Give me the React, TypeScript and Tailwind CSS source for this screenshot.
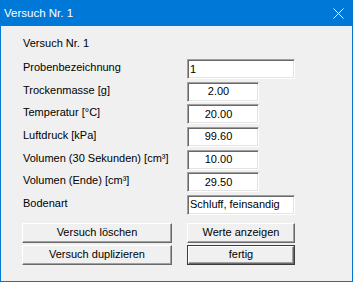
import React from "react";

const font = { fontFamily: '"Liberation Sans", Arial, sans-serif' };

function Field({ value, wide, align }: { value: string; wide?: boolean; align: "left" | "center" }) {
  return (
    <div
      className={`${wide ? "w-[108px]" : "w-[72px]"} h-[20px] bg-white border border-t-[#a0a0a0] border-l-[#a0a0a0] border-r-white border-b-white shadow-[inset_1px_1px_0_#696969,inset_-1px_-1px_0_#e3e3e3] flex items-center text-[11px] leading-[13px] text-black ${
        align === "left" ? "justify-start pl-[2px]" : "justify-center pr-[9px]"
      }`}
    >
      {value}
    </div>
  );
}

function Btn({ children, def, w }: { children: React.ReactNode; def?: boolean; w: string }) {
  if (def) {
    return (
      <div className={`${w} h-[20px] border border-[#3c3c3c] bg-[#f0f0f0]`}>
        <div className="w-full h-full border border-t-white border-l-white border-r-[#696969] border-b-[#696969] shadow-[inset_-1px_-1px_0_#a0a0a0] flex items-center justify-center text-[11px] leading-[13px] text-black pb-[1px]">
          {children}
        </div>
      </div>
    );
  }
  return (
    <div
      className={`${w} h-[20px] bg-[#f0f0f0] border border-t-white border-l-white border-r-[#696969] border-b-[#696969] shadow-[inset_-1px_-1px_0_#a0a0a0] flex items-center justify-center text-[11px] leading-[13px] text-black pb-[1px]`}
    >
      {children}
    </div>
  );
}

const rows: { label: string; value: string; wide?: boolean; align: "left" | "center" }[] = [
  { label: "Probenbezeichnung", value: "1", wide: true, align: "left" },
  { label: "Trockenmasse [g]", value: "2.00", align: "center" },
  { label: "Temperatur [°C]", value: "20.00", align: "center" },
  { label: "Luftdruck [kPa]", value: "99.60", align: "center" },
  { label: "Volumen (30 Sekunden) [cm³]", value: "10.00", align: "center" },
  { label: "Volumen (Ende) [cm³]", value: "29.50", align: "center" },
  { label: "Bodenart", value: "Schluff, feinsandig", wide: true, align: "left" },
];

export default function App() {
  return (
    <div className="w-[355px] h-[282px] bg-white" style={font}>
      <div className="w-[353px] h-[282px] bg-[#f0f0f0] border-x border-b border-[#0078d7] flex flex-col">
        <div className="h-[26px] bg-[#0078d7] flex items-center justify-between pl-[4px] pr-[9px] -mx-[1px]">
          <span className="text-white text-[11.5px] leading-[14px]">Versuch Nr. 1</span>
          <svg width="11" height="11" viewBox="0 0 11 11">
            <path d="M0.5 0.5 L10.5 10.5 M10.5 0.5 L0.5 10.5" stroke="white" strokeWidth="1" />
          </svg>
        </div>
        <div className="pl-[22px] pt-[11px] flex flex-col">
          <div className="h-[13px] text-[11px] leading-[13px] text-black">Versuch Nr. 1</div>
          <div className="mt-[9px] flex flex-col">
            {rows.map((r) => (
              <div key={r.label} className="h-[22.67px] flex items-start">
                <div className="w-[164px] h-[16px] text-[11px] leading-[16px] text-black">{r.label}</div>
                <Field value={r.value} wide={r.wide} align={r.align} />
              </div>
            ))}
          </div>
          <div className="mt-[5px] -ml-[1px] grid grid-cols-[150px_108px] gap-x-[15px] gap-y-[2px]">
            <Btn w="w-[150px]">Versuch löschen</Btn>
            <Btn w="w-[108px]">Werte anzeigen</Btn>
            <Btn w="w-[150px]">Versuch duplizieren</Btn>
            <Btn w="w-[108px]" def>
              fertig
            </Btn>
          </div>
        </div>
      </div>
    </div>
  );
}
